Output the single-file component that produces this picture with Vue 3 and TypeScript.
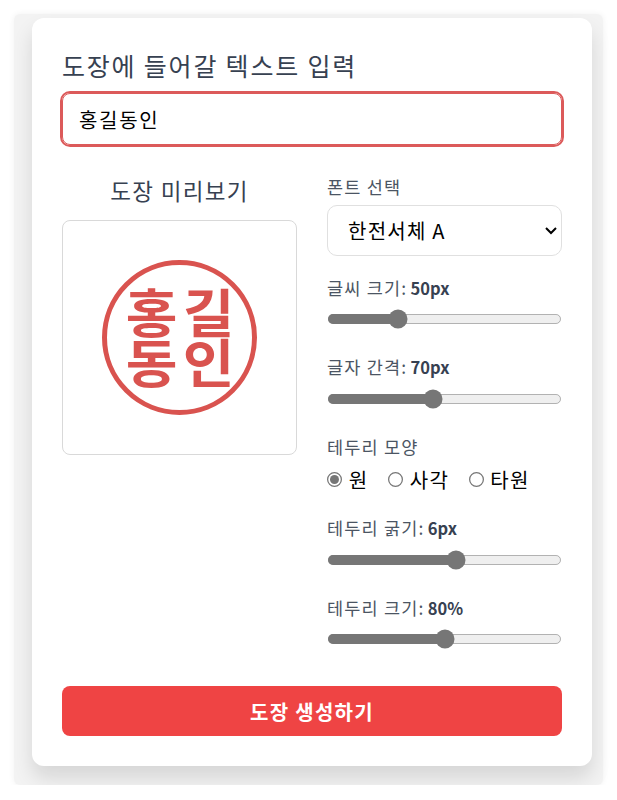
<script setup lang="ts">
import { ref } from 'vue'

const text = ref('홍길동인')
const font = ref('한전서체 A')
const shape = ref('원')
const shapes = ['원', '사각', '타원']
const fontSize = ref(50)
const spacing = ref(70)
const borderWidth = ref(6)
const borderSize = ref(80)
const glyphs = ['홍', '길', '동', '인']
</script>

<template>
  <div class="frame">
    <main class="card">
      <label class="title" for="stamp-text">도장에 들어갈 텍스트 입력</label>
      <input id="stamp-text" v-model="text" class="text-input" type="text" />

      <div class="columns">
        <section class="preview">
          <h2 class="preview-title">도장 미리보기</h2>
          <div class="preview-box">
            <div class="stamp">
              <div class="stamp-grid">
                <span v-for="g in glyphs" :key="g" class="stamp-glyph">{{ g }}</span>
              </div>
            </div>
          </div>
        </section>

        <section class="controls">
          <div class="group group-select">
            <label class="field-label" for="font-select">폰트 선택</label>
            <select id="font-select" v-model="font" class="select">
              <option>한전서체 A</option>
              <option>한전서체 B</option>
            </select>
          </div>
          <div class="group">
            <label class="field-label">글씨 크기: <b>{{ fontSize }}px</b></label>
            <input v-model.number="fontSize" class="range" type="range" min="10" max="150" />
          </div>
          <div class="group">
            <label class="field-label">글자 간격: <b>{{ spacing }}px</b></label>
            <input v-model.number="spacing" class="range" type="range" min="30" max="120" />
          </div>
          <div class="group">
            <span class="field-label">테두리 모양</span>
            <div class="radios">
              <label v-for="s in shapes" :key="s" class="radio-label">
                <input v-model="shape" class="radio" type="radio" name="shape" :value="s" />
                <span>{{ s }}</span>
              </label>
            </div>
          </div>
          <div class="group">
            <label class="field-label">테두리 굵기: <b>{{ borderWidth }}px</b></label>
            <input v-model.number="borderWidth" class="range" type="range" min="1" max="10" />
          </div>
          <div class="group">
            <label class="field-label">테두리 크기: <b>{{ borderSize }}%</b></label>
            <input v-model.number="borderSize" class="range" type="range" min="60" max="100" />
          </div>
        </section>
      </div>

      <button class="submit" type="button">도장 생성하기</button>
    </main>
  </div>
</template>

<style>
html, body { background: #fff; }
</style>

<style scoped>
.frame {
  box-sizing: border-box;
  width: 589px;
  height: 771px;
  margin: 14px 14px 0;
  padding: 4px 11px 0 18px;
  background: #f3f3f3;
  border-radius: 6px;
  box-shadow: 0 0 6px rgba(0, 0, 0, 0.06);
  font-family: "Noto Sans CJK KR", "Noto Sans", sans-serif;
}
.card {
  box-sizing: border-box;
  width: 560px;
  height: 748px;
  padding: 30px;
  background: #fff;
  border-radius: 12px;
  box-shadow: 0 12px 20px rgba(0, 0, 0, 0.12);
  display: flex;
  flex-direction: column;
}
.title {
  display: block;
  font-size: 25px;
  line-height: 36px;
  letter-spacing: 1.8px;
  color: #374151;
  margin-top: -1px;
  margin-bottom: 10px;
}
.text-input {
  box-sizing: border-box;
  width: 100%;
  height: 52px;
  padding: 0 16px;
  border: 1px solid #dc5a5a;
  border-radius: 8px;
  outline: 2px solid #dc5a5a;
  font: inherit;
  font-size: 20px;
  letter-spacing: 1.7px;
  color: #000;
}
.columns {
  display: grid;
  grid-template-columns: 235px 235px;
  column-gap: 30px;
  margin-top: 27px;
}
.preview-title {
  margin: 0 0 13px;
  font-size: 22.5px;
  font-weight: 400;
  line-height: 33px;
  letter-spacing: 1.3px;
  color: #374151;
  text-align: center;
  padding-top: 2px;
}
.preview-box {
  box-sizing: border-box;
  width: 235px;
  height: 235px;
  border: 1px solid #d9d9d9;
  border-radius: 8px;
  display: flex;
  align-items: center;
  justify-content: center;
}
.stamp {
  box-sizing: border-box;
  width: 155px;
  height: 155px;
  border: 5.5px solid #d9534f;
  border-radius: 50%;
  display: flex;
  align-items: center;
  justify-content: center;
}
.stamp-grid {
  display: grid;
  grid-template-columns: 57px 57px;
  grid-auto-rows: 50px;
  padding-bottom: 3px;
}
.stamp-glyph {
  display: block;
  font-size: 52px;
  font-weight: 700;
  line-height: 50px;
  text-align: center;
  color: #d9534f;
  transform: scaleX(1.08);
}
.controls {
  display: flex;
  flex-direction: column;
  padding-top: 1px;
  accent-color: #767676;
}
.group {
  display: flex;
  flex-direction: column;
  margin-top: 18.1px;
}
.group-select { margin-top: 0; }
.field-label {
  font-size: 17.5px;
  line-height: 27px;
  letter-spacing: 1.2px;
  color: #4b5563;
}
.field-label b {
  margin-left: -2px;
  font-weight: 600;
  font-size: 16.5px;
  letter-spacing: 0;
  color: #374151;
}
.select {
  zoom: 1.25;
  box-sizing: border-box;
  width: 100%;
  height: 40.4px;
  margin-top: 4px;
  padding: 0 12px;
  border: 1px solid #e0e0e0;
  border-radius: 8px;
  background: #fff;
  font: inherit;
  font-size: 16px;
  letter-spacing: 1px;
  color: #000;
}
.range {
  zoom: 1.25;
  width: 188px;
  margin: 5.8px 0 5.2px;
}
.radios {
  display: flex;
  gap: 19.5px;
  margin-top: 5px;
  margin-bottom: 1px;
}
.radio-label {
  display: flex;
  align-items: center;
  font-size: 20px;
  line-height: 30px;
  letter-spacing: 1.3px;
  color: #000;
}
.radio {
  zoom: 1.25;
  margin: 0 4.4px 0 0;
}
.submit {
  box-sizing: border-box;
  width: 100%;
  height: 50px;
  margin-top: auto;
  border: none;
  border-radius: 8px;
  background: #ef4444;
  color: #fff;
  font: inherit;
  font-size: 20px;
  font-weight: 700;
  letter-spacing: 1.3px;
}
</style>
